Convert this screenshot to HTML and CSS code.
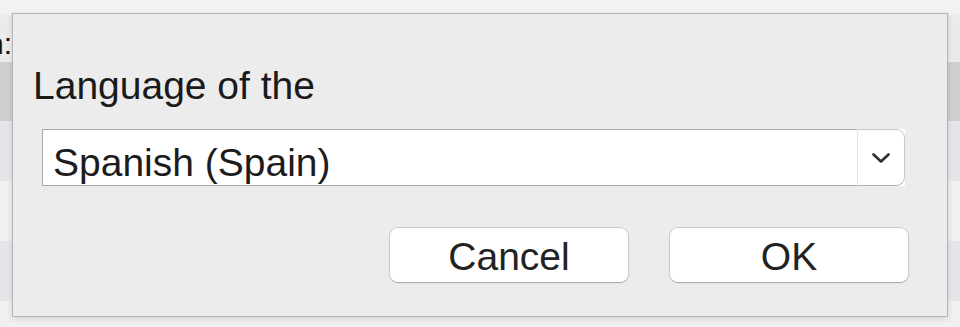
FILE: index.html
```html
<!DOCTYPE html>
<html lang="en">
<head>
    <meta charset="UTF-8">
    <meta name="viewport" content="width=device-width, initial-scale=1.0">
    <title>Language</title>
    <link rel="stylesheet" href="styles.css">
</head>
<body>
    <div class="window">
        <div class="toolbar"></div>
        <div class="row row-head">
            <div class="cell-clip"><span>Region:</span></div>
        </div>
        <div class="row row-selected"></div>
        <div class="row row-alt"></div>
        <div class="row"></div>
        <div class="row row-alt"></div>
        <div class="row row-last"></div>
    </div>

    <div class="dialog">
        <div class="dialog-label">Language of the</div>
        <div class="select">
            <div class="select-value">Spanish (Spain)</div>
            <div class="select-arrow">
                <svg width="20" height="12" viewBox="0 0 20 12">
                    <polyline points="2.5,2.5 10,9.5 17.5,2.5" fill="none" stroke="#333" stroke-width="2.8" stroke-linecap="round" stroke-linejoin="round"/>
                </svg>
            </div>
        </div>
        <div class="dialog-buttons">
            <button class="btn">Cancel</button>
            <button class="btn">OK</button>
        </div>
    </div>
</body>
</html>
```

FILE: styles.css
```css
*,
*::after,
*::before {
    box-sizing: border-box;
}
body {
    margin: 0;
    width: 960px;
    height: 327px;
    overflow: hidden;
    font-family: "Liberation Sans", Arial, sans-serif;
    background: #f0f0f0;
    position: relative;
}
.window {
    display: flex;
    flex-direction: column;
}
.toolbar {
    height: 14px;
    background: #f2f2f2;
}
.row {
    height: 60px;
    background: #f0f0f0;
}
.row-head {
    height: 48px;
    background: #ebebeb;
}
.cell-clip {
    display: flex;
    justify-content: flex-end;
    width: 12px;
    overflow: hidden;
    white-space: nowrap;
    font-size: 30px;
    line-height: 40px;
    padding-top: 10px;
    color: #111;
}
.row-selected {
    height: 59px;
    background: #d0d0d0;
}
.row-alt {
    background: #e4e6ea;
}
.row-last {
    height: 26px;
}
.dialog {
    position: absolute;
    left: 12px;
    top: 13px;
    width: 936px;
    height: 304px;
    background: #ececec;
    border: 1px solid #b5b5b5;
    box-shadow: 0 2px 6px rgba(0, 0, 0, 0.12);
}
.dialog-label {
    margin: 49px 0 0 20px;
    font-size: 39px;
    line-height: 46px;
    color: #1a1a1a;
}
.select {
    display: flex;
    margin: 20px 0 0 29px;
    width: 863px;
    height: 57px;
    background: #fff;
}
.select-value {
    flex-grow: 1;
    border: 1px solid #a9a9a9;
    border-right: none;
    padding: 10px 0 0 10px;
    font-size: 39px;
    line-height: 46px;
    color: #1c1c1c;
    overflow: hidden;
}
.select-arrow {
    width: 48px;
    display: flex;
    align-items: center;
    justify-content: center;
    border: 1px solid #c6c6c6;
    border-left: 1px solid #e3e3e3;
    border-bottom-color: #b0b0b0;
    border-radius: 0 9px 9px 0;
}
.dialog-buttons {
    display: flex;
    justify-content: flex-end;
    gap: 40px;
    margin-top: 41px;
    padding-right: 38px;
}
.btn {
    width: 240px;
    height: 56px;
    padding: 3px 0 0;
    background: #fff;
    border: 1px solid #c9c9c9;
    border-bottom-color: #b3b3b3;
    border-radius: 9px;
    font-family: inherit;
    font-size: 39px;
    line-height: 46px;
    color: #222;
    box-shadow: 0 1px 1px rgba(0, 0, 0, 0.06);
}
```
